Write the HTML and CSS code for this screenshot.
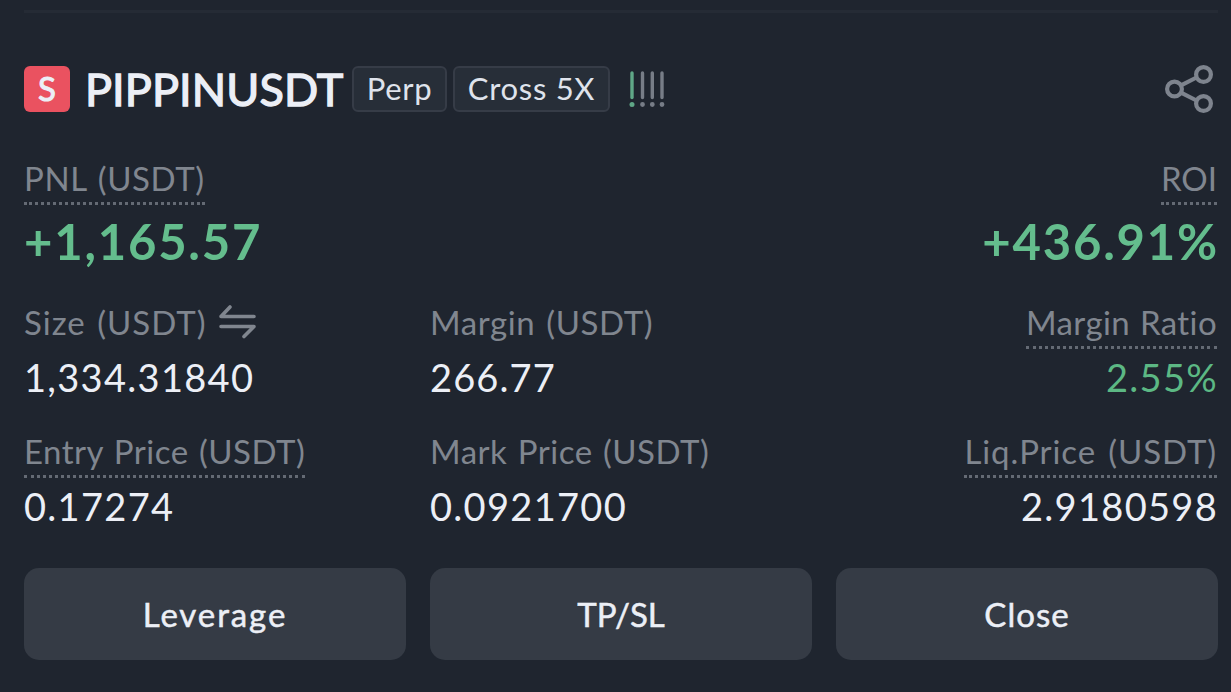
FILE: index.html
```html
<!DOCTYPE html>
<html lang="en">
<head>
<meta charset="utf-8">
<title>Position</title>
<link rel="stylesheet" href="styles.css">
</head>
<body>
<main class="position">
  <header class="head">
    <span class="side">S</span>
    <h1 class="symbol">PIPPINUSDT</h1>
    <span class="tag perp">Perp</span>
    <span class="tag cross">Cross 5X</span>
    <svg class="risk" width="38" height="38" viewBox="0 0 38 38" fill="none" stroke-width="3.400" stroke-linecap="round">
      <g stroke="#5fa787"><path d="M4 3V27.500"/><path d="M4 34.500h.01" stroke-width="5"/></g>
      <g stroke="#777d87"><path d="M14.500 3V27.500M24.300 3V27.500M34 3V27.500"/><path d="M14.500 34.500h.01M24.300 34.500h.01M34 34.500h.01" stroke-width="4.800"/></g>
    </svg>
    <svg class="share" width="50" height="50" viewBox="0 0 50 50" fill="none" stroke="#7e848e" stroke-width="4.200">
      <circle cx="10.500" cy="25" r="7.400"/><circle cx="39.500" cy="10.500" r="7.400"/><circle cx="39.500" cy="39.500" r="7.400"/>
      <path d="M17.500 21.200L32.500 13.500M17.500 28.800L32.500 36.500"/>
    </svg>
  </header>
  <section class="row main-row">
    <div class="cell"><span class="label dotted l-pnl">PNL (USDT)</span><span class="value big v-pnl">+1,165.57</span></div>
    <div class="cell end"><span class="label dotted l-roi">ROI</span><span class="value big v-roi">+436.91%</span></div>
  </section>
  <section class="row">
    <div class="cell">
      <span class="label l-size">Size (USDT)<svg class="swap" width="38" height="34" viewBox="0 0 38 34" fill="none" stroke="#80868f" stroke-width="3.600" stroke-linecap="round" stroke-linejoin="round"><path d="M36 11.500H3L12 2M3 21.500H36L26 31.500"/></svg></span>
      <span class="value v-size">1,334.31840</span>
    </div>
    <div class="cell"><span class="label l-margin">Margin (USDT)</span><span class="value v-margin">266.77</span></div>
    <div class="cell end"><span class="label dotted l-ratio">Margin Ratio</span><span class="value green v-ratio">2.55%</span></div>
  </section>
  <section class="row">
    <div class="cell"><span class="label dotted l-entry">Entry Price (USDT)</span><span class="value v-entry">0.17274</span></div>
    <div class="cell"><span class="label l-mark">Mark Price (USDT)</span><span class="value v-mark">0.0921700</span></div>
    <div class="cell end"><span class="label dotted l-liq">Liq.Price (USDT)</span><span class="value v-liq">2.9180598</span></div>
  </section>
  <footer class="actions">
    <button class="btn leverage">Leverage</button>
    <button class="btn">TP/SL</button>
    <button class="btn close">Close</button>
  </footer>
</main>
</body>
</html>
```
FILE: styles.css
```css
* { box-sizing: border-box; }
body {
  margin: 0;
  background: #1f252f;
  color: #eceff6;
  font-family: Lato, "Liberation Sans", sans-serif;
  font-kerning: normal;
}
.position {
  height: 692px;
  padding: 10px 13px 0 24px;
  overflow: hidden;
}
.head {
  display: flex;
  align-items: center;
  height: 102px;
  padding-top: 53px;
  border-top: 3px solid #252b35;
}
.side {
  width: 46px;
  height: 46px;
  border-radius: 6px;
  background: #ea5260;
  font-size: 33px;
  line-height: 45px;
  text-align: center;
  -webkit-text-stroke: 1px currentColor;
}
.symbol {
  width: 266px;
  margin: 0;
  padding-left: 15px;
  font-size: 45px;
  font-weight: 400;
  line-height: 46px;
  letter-spacing: 0.1px;
  white-space: nowrap;
  -webkit-text-stroke: 1.3px currentColor;
}
.tag {
  flex: none;
  height: 46px;
  margin-left: 16px;
  border: 2px solid #363c47;
  border-radius: 6px;
  background: #272e38;
  color: #dfe3ec;
  font-size: 31px;
  line-height: 41px;
  letter-spacing: 0.7px;
  text-align: center;
  white-space: nowrap;
}
.perp { width: 95px; }
.cross { width: 157px; margin-left: 6px; }
.risk { margin-left: 18px; }
.share { margin-right: 4px; margin-left: auto; }
.row {
  display: grid;
  grid-template-columns: repeat(3, 382px);
  column-gap: 24px;
  height: 129px;
}
.main-row {
  grid-template-columns: 1fr 1fr;
  height: 144px;
  margin-top: 46px;
}
.cell {
  display: flex;
  flex-direction: column;
  align-items: flex-start;
}
.end { align-items: flex-end; }
.label {
  display: flex;
  height: 47px;
  color: #80868f;
  font-size: 33px;
  line-height: 40px;
  letter-spacing: 0.6px;
  word-spacing: 2px;
  white-space: nowrap;
}
.dotted { border-bottom: 3px dotted #646a74; }
.l-roi { letter-spacing: 0; margin-right: 1px; }
.l-size { letter-spacing: 1px; word-spacing: 2px; }
.l-ratio { letter-spacing: 0.4px; word-spacing: 1px; margin-right: 1px; }
.l-entry, .l-mark { letter-spacing: 0.5px; word-spacing: 1.5px; }
.l-liq { letter-spacing: 0.9px; word-spacing: 3px; margin-right: 1px; }
.swap { margin: 3px 0 0 12px; }
.value {
  font-size: 38px;
  line-height: 56px;
  letter-spacing: 1.3px;
  white-space: nowrap;
}
.v-margin { letter-spacing: 1.1px; }
.big {
  margin-top: 8px;
  color: #64bd8d;
  font-size: 49px;
  font-weight: 700;
  letter-spacing: 1.8px;
}
.v-roi { margin-right: -1px; }
.green { color: #5cb884; }
.actions {
  display: grid;
  grid-template-columns: repeat(3, 382px);
  gap: 24px;
  margin-top: 8px;
}
.btn {
  height: 92px;
  padding: 0;
  border: 0;
  border-radius: 15px;
  background: #353b45;
  color: #eceff6;
  font-family: inherit;
  font-size: 33px;
  -webkit-text-stroke: 0.5px currentColor;
}
.leverage { letter-spacing: 1.9px; }
.close { letter-spacing: 1px; }
```
